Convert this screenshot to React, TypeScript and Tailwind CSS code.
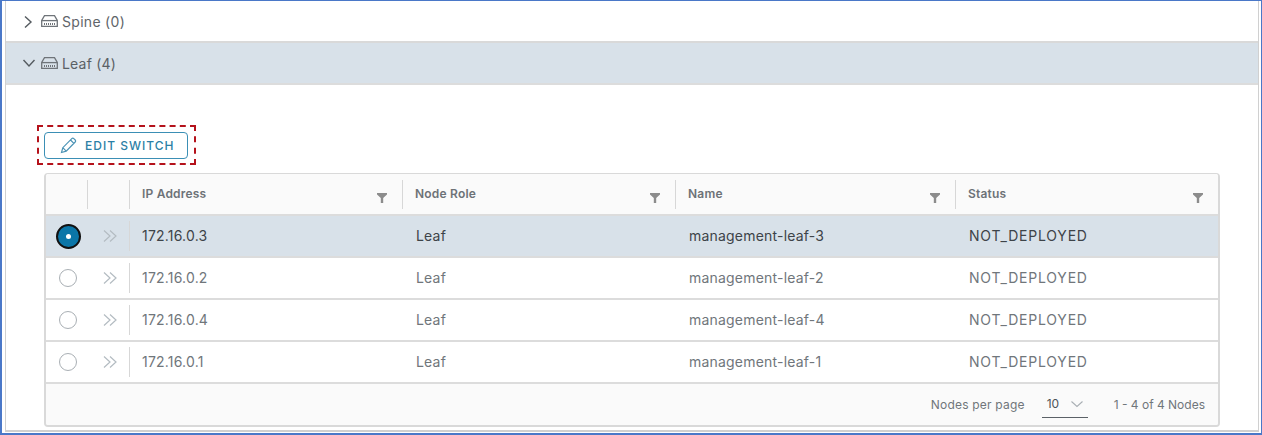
const columns = "grid grid-cols-[41px_42px_273px_273px_280px_1fr]";

function Chevrons() {
  return (
    <svg width="16" height="14" viewBox="0 0 16 14" fill="none" stroke="#b4bcc2" strokeWidth="1.2">
      <path d="M2 1.5 8 7l-6 5.5M8 1.5 14 7l-6 5.5" />
    </svg>
  );
}

function Filter() {
  return (
    <svg width="10" height="10" viewBox="0 0 10 10" fill="#8c8c8c">
      <path d="M0 0h10v1.6L6.2 5v5H3.8V5L0 1.6z" />
    </svg>
  );
}

function SwitchIcon() {
  return (
    <svg width="17" height="12" viewBox="0 0 17 12" fill="none" stroke="#6f7479" strokeWidth="1.3">
      <path d="M3.5 .7h10L16.3 5.5v5.8H.7V5.5z" />
      <path d="M.8 5.6h15.4" />
      <path d="M3 9h11" strokeDasharray="1 1" strokeWidth="2" />
    </svg>
  );
}

function HeaderCell({ label, filter = true }: { label: string; filter?: boolean }) {
  return (
    <div className="relative flex items-center pl-[13px] pr-4">
      <span className="absolute left-0 top-[6px] h-[29px] w-px bg-[#d7d7d7]" />
      <span className="text-[12px] font-semibold tracking-[0.2px] text-[#6d7277]">{label}</span>
      {filter && (
        <span className="absolute right-[15px] top-[19px]">
          <Filter />
        </span>
      )}
    </div>
  );
}

function Row({ ip, name, selected }: { ip: string; name: string; selected?: boolean }) {
  const text = selected ? "text-[#3d4348]" : "text-[#70767b]";
  return (
    <div className={`${columns} h-[42px] items-center border-b-2 border-[#dcdcdc] text-[14px] tracking-[0.2px] ${selected ? "bg-[#d8e1e9]" : "bg-white"} ${text}`}>
      <div className="flex justify-center pl-[3px]">
        {selected ? (
          <span className="flex h-[25px] w-[25px] items-center justify-center rounded-full border-2 border-[#111] bg-[#0b76a8]">
            <span className="h-[5px] w-[5px] rounded-full bg-white" />
          </span>
        ) : (
          <span className="h-[18px] w-[18px] rounded-full border-[1.5px] border-[#a9afb4] bg-white" />
        )}
      </div>
      <div className="relative flex h-full items-center justify-center pl-[4px]">
        <Chevrons />
      </div>
      <div className="relative flex h-full items-center pl-[13px] pb-[2px]">
        <span className="absolute left-0 top-[5px] h-[30px] w-px bg-[#d7d7d7]" />
        {ip}
      </div>
      <div className="pl-[14px] pb-[2px]">Leaf</div>
      <div className="pl-[14px] pb-[2px]">{name}</div>
      <div className="pl-[14px] pb-[2px] tracking-[0.8px]">NOT_DEPLOYED</div>
    </div>
  );
}

export default function App() {
  return (
    <div className="h-[435px] w-[1262px] overflow-hidden bg-white font-['Inter','Noto_Sans',sans-serif]">
      <div className="h-full border border-b-2 border-l-2 border-[#4a78c8] bg-white pl-[3px] pr-[2px] pb-[1px]">
        <div className="flex h-full flex-col border-x border-b-2 border-[#d0d0d0]">
          <div className="flex h-[42px] items-center border-b-2 border-[#d9d9d9] bg-white pl-[18px] text-[14px] tracking-[0.3px] text-[#5f656a]">
            <svg width="10" height="14" viewBox="0 0 10 14" fill="none" stroke="#555b60" strokeWidth="1.4" className="mr-[8px] ml-[-1px] mt-[1px]">
              <path d="M2 1.5 8 7l-6 5.5" />
            </svg>
            <SwitchIcon />
            <span className="ml-[4px]">Spine (0)</span>
          </div>
          <div className="flex h-[42px] items-center border-b-2 border-[#dcdcdc] bg-[#d8e1e9] pl-[16px] text-[14px] tracking-[0.2px] text-[#5a6065]">
            <svg width="14" height="10" viewBox="0 0 14 10" fill="none" stroke="#555b60" strokeWidth="1.4" className="mr-[5px]">
              <path d="M1.5 2 7 8l5.5-6" />
            </svg>
            <SwitchIcon />
            <span className="ml-[4px]">Leaf (4)</span>
          </div>
          <div className="flex-1 pl-[38px] pt-[47px]">
            <div className="relative w-[1176px]">
              <div className="absolute -left-[7px] -top-[7px] h-[40px] w-[159px] border-2 border-dashed border-[#b5121b]" />
              <button className="flex h-[27px] w-[144px] items-center rounded-[4px] border-[1.5px] border-[#3b8fb5] bg-white pl-[15px] text-[12px] font-medium tracking-[1px] text-[#2c7fa6]">
                <svg width="17" height="17" viewBox="0 0 17 17" fill="none" stroke="#4b93b5" strokeWidth="1.2" className="mr-[8px]">
                  <path d="M1.5 15.5 2.8 10.7 11.8 1.6a1.4 1.4 0 0 1 2 0l1.4 1.4a1.4 1.4 0 0 1 0 2L6.2 14.2zM2.8 10.7 6.2 14.2M10.5 3l3.4 3.4" />
                </svg>
                EDIT SWITCH
              </button>
              <div className="mt-[14px] overflow-hidden rounded-[4px] border-2 border-t border-[#d9d9d9]">
                <div className={`${columns} h-[42px] border-b-2 border-[#dcdcdc] bg-[#fafafa]`}>
                  <div />
                  <HeaderCell label="" filter={false} />
                  <HeaderCell label="IP Address" />
                  <HeaderCell label="Node Role" />
                  <HeaderCell label="Name" />
                  <HeaderCell label="Status" />
                </div>
                <Row ip="172.16.0.3" name="management-leaf-3" selected />
                <Row ip="172.16.0.2" name="management-leaf-2" />
                <Row ip="172.16.0.4" name="management-leaf-4" />
                <Row ip="172.16.0.1" name="management-leaf-1" />
                <div className="flex h-[41px] items-center justify-end bg-[#fafafa] pr-[13px] text-[12px] text-[#70767b]">
                  <span className="tracking-[0.2px]">Nodes per page</span>
                  <span className="ml-[17px] flex h-[26px] w-[46px] items-center gap-[11px] border-b border-[#5b6167] pl-[5px] text-[#4d5358]">
                    10
                    <svg width="14" height="8" viewBox="0 0 14 8" fill="none" stroke="#a9afb4" strokeWidth="1.1">
                      <path d="M1.5 1.5 7 6.5l5.5-5" />
                    </svg>
                  </span>
                  <span className="ml-[26px]">1 - 4 of 4 Nodes</span>
                </div>
              </div>
            </div>
          </div>
        </div>
      </div>
    </div>
  );
}
